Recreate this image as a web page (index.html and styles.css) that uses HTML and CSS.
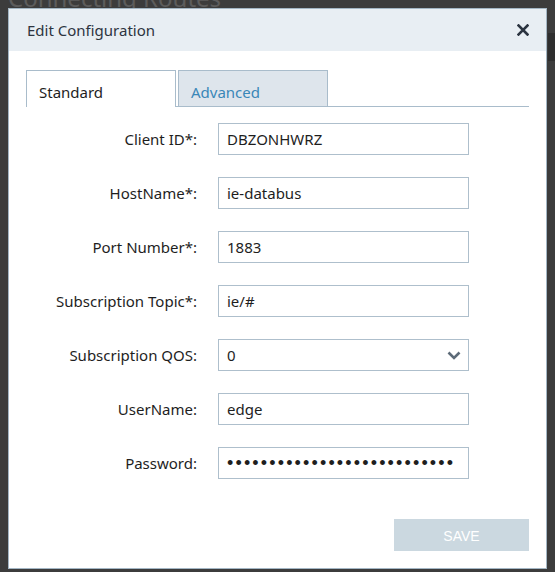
FILE: index.html
```html
<!DOCTYPE html>
<html>
<head>
<meta charset="utf-8">
<link rel="stylesheet" href="styles.css">
</head>
<body>
<div class="page">
  <h1 class="page-title">Connecting Routes</h1>
</div>
<div class="right-strip"></div>
<div class="modal">
  <div class="modal-header">
    <span class="modal-title">Edit Configuration</span>
    <svg class="close" width="12" height="12" viewBox="0 0 12 12"><path d="M1.5 1.5 L10.5 10.5 M10.5 1.5 L1.5 10.5" stroke="#2b3440" stroke-width="2.6" stroke-linecap="square"/></svg>
  </div>
  <div class="modal-body">
    <div class="tabs">
      <div class="tab active">Standard</div>
      <div class="tab">Advanced</div>
    </div>
    <div class="form">
      <label class="lbl">Client ID*:</label>
      <div class="field">DBZONHWRZ</div>
      <label class="lbl">HostName*:</label>
      <div class="field">ie-databus</div>
      <label class="lbl">Port Number*:</label>
      <div class="field">1883</div>
      <label class="lbl">Subscription Topic*:</label>
      <div class="field">ie/#</div>
      <label class="lbl">Subscription QOS:</label>
      <div class="field select">0
        <svg class="chev" width="14" height="9" viewBox="0 0 14 9"><path d="M1.5 1.5 L7 7 L12.5 1.5" fill="none" stroke="#5d6b78" stroke-width="2.6"/></svg>
      </div>
      <label class="lbl">UserName:</label>
      <div class="field">edge</div>
      <label class="lbl">Password:</label>
      <div class="field pw">•••••••••••••••••••••••••••</div>
    </div>
    <div class="footer">
      <button class="save">SAVE</button>
    </div>
  </div>
</div>
</body>
</html>
```

FILE: styles.css
```css
html, body {
  margin: 0;
  padding: 0;
  background: #3c3c3c;
  width: 555px;
  height: 572px;
  overflow: hidden;
  font-family: "Noto Sans", "Open Sans", sans-serif;
}
.page {
  padding-left: 8px;
}
.page-title {
  margin: -16px 0 0 0;
  font-size: 24px;
  font-weight: normal;
  color: #5c5c5c;
  line-height: 28px;
}
.right-strip {
  position: absolute;
  left: 548px;
  top: 33px;
  width: 7px;
  height: 28px;
  background: #2e2e2e;
}
.modal {
  position: absolute;
  left: 8px;
  top: 8px;
  width: 537px;
  height: 559px;
  background: #fff;
  border: 1px solid #a3b6c4;
  display: flex;
  flex-direction: column;
}
.modal-header {
  height: 42px;
  background: #e8eef3;
  display: flex;
  align-items: center;
  justify-content: space-between;
  padding: 0 17px 0 18px;
}
.modal-title {
  font-size: 15px;
  color: #2d3440;
}
.close {
  display: block;
}
.modal-body {
  padding: 19px 17px 0 17px;
  display: flex;
  flex-direction: column;
}
.tabs {
  display: flex;
  gap: 2px;
  border-bottom: 1px solid #a9bccb;
  height: 36px;
}
.tab {
  width: 150px;
  height: 36px;
  box-sizing: border-box;
  border: 1px solid #a9bccb;
  border-bottom: none;
  background: #dee5ec;
  color: #3a87b8;
  font-size: 15px;
  padding: 11px 0 0 12px;
  line-height: 20px;
}
.tab.active {
  background: #fff;
  color: #1e1e1e;
  height: 37px;
}
.form {
  margin-top: 16px;
  display: grid;
  grid-template-columns: 171px 251px;
  column-gap: 21px;
  row-gap: 22px;
  align-items: center;
}
.lbl {
  text-align: right;
  font-size: 15px;
  color: #1e1e1e;
}
.field {
  height: 32px;
  box-sizing: border-box;
  border: 1px solid #aebfcc;
  padding: 0 8px;
  font-size: 15px;
  color: #1e1e1e;
  display: flex;
  align-items: center;
}
.field.select {
  justify-content: space-between;
  padding-right: 7px;
}
.field.pw {
  font-family: "Liberation Sans", Arial, sans-serif;
  font-size: 18px;
  letter-spacing: 2.15px;
  overflow: hidden;
  white-space: nowrap;
}
.footer {
  margin-top: 40px;
  display: flex;
  justify-content: flex-end;
}
.save {
  width: 135px;
  height: 32px;
  border: none;
  background: #cbd8e0;
  color: #fff;
  font-family: "Liberation Sans", Arial, sans-serif;
  font-size: 14px;
  padding: 2px 0 0 0;
}
```
